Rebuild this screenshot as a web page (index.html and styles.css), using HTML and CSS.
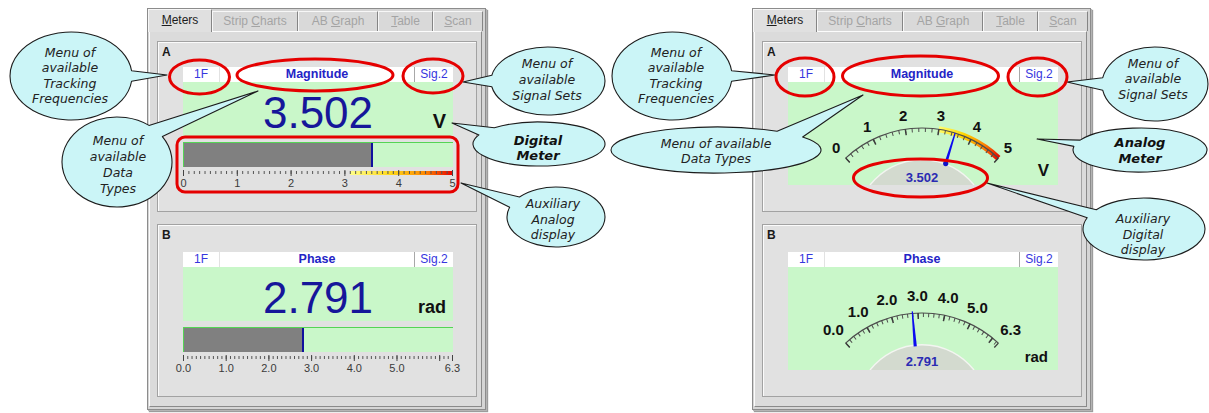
FILE: index.html
```html
<!DOCTYPE html>
<html>
<head>
<meta charset="utf-8">
<title>Meters</title>
<link rel="stylesheet" href="styles.css">
</head>
<body>
<div class="page">

  <div class="win">
    <div class="tabs">
      <div class="tab t1 active"><u>M</u>eters</div>
      <div class="tab t2">Strip <u>C</u>harts</div>
      <div class="tab t3">AB <u>G</u>raph</div>
      <div class="tab t4"><u>T</u>able</div>
      <div class="tab t5"><u>S</u>can</div>
    </div>
    <div class="panel">
      <div class="group">
        <div class="glabel">A</div>
        <div class="meter">
          <div class="hdr"><span class="c1">1F</span><span class="c2">Magnitude</span><span class="c3">Sig.2</span></div>
          <div class="digital"><span class="num">3.502</span><span class="unit">V</span></div>
          <div class="bar"><div class="fill" style="width:189px"></div></div>
          <svg class="scale" width="270" height="22" viewBox="0 0 270 22">
            <defs>
              <linearGradient id="hot" x1="0" x2="1" y1="0" y2="0">
                <stop offset="0" stop-color="#ffff88"/>
                <stop offset="0.4" stop-color="#ffd81a"/>
                <stop offset="0.72" stop-color="#ff8a00"/>
                <stop offset="1" stop-color="#ea0000"/>
              </linearGradient>
            </defs>
            <rect class="hotband" x="167" y="4" width="103" height="4"/>
            <line class="sc-minor a5" x1="0" y1="5.5" x2="270" y2="5.5"/>
            <line class="sc-major a5" x1="0" y1="6" x2="270" y2="6"/>
            <text class="sc-lbl" x="0.5" y="20">0</text>
            <text class="sc-lbl" x="54.3" y="20">1</text>
            <text class="sc-lbl" x="108.1" y="20">2</text>
            <text class="sc-lbl" x="161.9" y="20">3</text>
            <text class="sc-lbl" x="215.7" y="20">4</text>
            <text class="sc-lbl" x="269.5" y="20">5</text>
          </svg>
        </div>
      </div>
      <div class="group b">
        <div class="glabel">B</div>
        <div class="meter">
          <div class="hdr"><span class="c1">1F</span><span class="c2">Phase</span><span class="c3">Sig.2</span></div>
          <div class="digital"><span class="num">2.791</span><span class="unit rad">rad</span></div>
          <div class="bar"><div class="fill" style="width:120px"></div></div>
          <svg class="scale" width="270" height="22" viewBox="0 0 270 22">
            <line class="sc-minor b6" x1="0" y1="5.5" x2="270" y2="5.5"/>
            <line class="sc-major b6" x1="0" y1="6" x2="270" y2="6"/>
            <line class="sc-end" x1="269.5" y1="3" x2="269.5" y2="9"/>
            <text class="sc-lbl" x="0.5" y="20">0.0</text>
            <text class="sc-lbl" x="43.2" y="20">1.0</text>
            <text class="sc-lbl" x="85.9" y="20">2.0</text>
            <text class="sc-lbl" x="128.6" y="20">3.0</text>
            <text class="sc-lbl" x="171.3" y="20">4.0</text>
            <text class="sc-lbl" x="214" y="20">5.0</text>
            <text class="sc-lbl" x="269.5" y="20">6.3</text>
          </svg>
        </div>
      </div>
    </div>
  </div>

  <div class="win">
    <div class="tabs">
      <div class="tab t1 active"><u>M</u>eters</div>
      <div class="tab t2">Strip <u>C</u>harts</div>
      <div class="tab t3">AB <u>G</u>raph</div>
      <div class="tab t4"><u>T</u>able</div>
      <div class="tab t5"><u>S</u>can</div>
    </div>
    <div class="panel">
      <div class="group">
        <div class="glabel">A</div>
        <div class="meter">
          <div class="hdr"><span class="c1">1F</span><span class="c2">Magnitude</span><span class="c3">Sig.2</span></div>
          <div class="analog">
            <svg class="dial" width="270" height="103" viewBox="0 0 270 103">
              <defs>
                <linearGradient id="band" gradientUnits="userSpaceOnUse" x1="150" y1="47" x2="211" y2="77">
                  <stop offset="0" stop-color="#ffff70"/>
                  <stop offset="0.38" stop-color="#ffd500"/>
                  <stop offset="0.72" stop-color="#ff8000"/>
                  <stop offset="1" stop-color="#e60000"/>
                </linearGradient>
              </defs>
              <path class="band" d="M 150.74 47.25 A 112 112 0 0 1 210.38 76.09"/>
              <path class="arc" d="M 57.62 76.09 A 112 112 0 0 1 210.38 76.09"/>
              <path class="tk-min a5" d="M 58.98 77.55 A 110 110 0 0 1 209.02 77.55"/>
              <path class="tk-maj a5" d="M 59.66 78.28 A 109 109 0 0 1 208.34 78.28"/>
              <line class="tk-end" x1="61.71" y1="80.48" x2="57.62" y2="76.09"/>
              <line class="tk-end" x1="206.29" y1="80.48" x2="210.38" y2="76.09"/>
              <text class="dl" x="48.07" y="65.85">0</text>
              <text class="dl" x="79.16" y="44.56">1</text>
              <text class="dl" x="115.16" y="33.41">2</text>
              <text class="dl" x="152.84" y="33.41">3</text>
              <text class="dl" x="188.84" y="44.56">4</text>
              <text class="dl" x="219.93" y="65.85">5</text>
              <text class="du" x="261" y="94">V</text>
              <path class="hub" d="M 82 103 A 66 66 0 0 1 186 103 Z"/>
              <path class="hub-rim" d="M 82 103 A 66 66 0 0 1 186 103"/>
              <polygon class="needle" points="156.27,81.15 159.13,82.03 167.74,51.21 166.60,50.85"/>
              <circle class="pivot" cx="157.7" cy="81.6" r="2.6"/>
              <text class="hubtxt" x="134" y="100">3.502</text>
            </svg>
          </div>
        </div>
      </div>
      <div class="group b">
        <div class="glabel">B</div>
        <div class="meter">
          <div class="hdr"><span class="c1">1F</span><span class="c2">Phase</span><span class="c3">Sig.2</span></div>
          <div class="analog">
            <svg class="dial" width="270" height="103" viewBox="0 0 270 103">
              <path class="arc" d="M 57.62 76.09 A 112 112 0 0 1 210.38 76.09"/>
              <path class="tk-min b6" d="M 58.98 77.55 A 110 110 0 0 1 209.02 77.55"/>
              <path class="tk-maj b6" d="M 59.66 78.28 A 109 109 0 0 1 208.34 78.28"/>
              <line class="tk-end" x1="61.71" y1="80.48" x2="57.62" y2="76.09"/>
              <line class="tk-end" x1="206.29" y1="80.48" x2="210.38" y2="76.09"/>
              <text class="dl" x="45.34" y="62.92">0.0</text>
              <text class="dl" x="70.27" y="44.69">1.0</text>
              <text class="dl" x="98.82" y="32.85">2.0</text>
              <text class="dl" x="129.36" y="28.08">3.0</text>
              <text class="dl" x="160.14" y="30.65">4.0</text>
              <text class="dl" x="189.47" y="40.43">5.0</text>
              <text class="dl" x="222.66" y="62.92">6.3</text>
              <text class="du rad" x="260" y="95">rad</text>
              <path class="hub" d="M 82 103 A 66 66 0 0 1 186 103 Z"/>
              <path class="hub-rim" d="M 82 103 A 66 66 0 0 1 186 103"/>
              <polygon class="needle" points="125.66,79.43 128.84,79.15 124.86,44.37 123.66,44.47"/>
              <text class="hubtxt" x="134" y="99">2.791</text>
            </svg>
          </div>
        </div>
      </div>
    </div>
  </div>

  <svg class="overlay" width="1209" height="413" viewBox="0 0 1209 413">
    <!-- left callouts -->
    <path class="balloon" d="M 131.56 70.73 L 167 75 L 131.56 81.27 A 61 44 0 1 1 131.56 70.73 Z"/>
    <text class="bt" x="70" y="57">Menu of</text>
    <text class="bt" x="70" y="72">available</text>
    <text class="bt" x="70" y="88">Tracking</text>
    <text class="bt" x="70" y="103">Frequencies</text>

    <path class="balloon" d="M 149.0 125.4 L 258 91 L 162.4 136.6 A 55 45 0 1 1 149.0 125.4 Z"/>
    <text class="bt" x="118" y="145">Menu of</text>
    <text class="bt" x="118" y="161">available</text>
    <text class="bt" x="118" y="177">Data</text>
    <text class="bt" x="118" y="193">Types</text>

    <path class="balloon" d="M 491.82 86.75 L 463 82 L 491.82 75.25 A 57 34 0 1 1 491.82 86.75 Z"/>
    <text class="bt" x="547" y="68">Menu of</text>
    <text class="bt" x="547" y="84">available</text>
    <text class="bt" x="547" y="100">Signal Sets</text>

    <path class="balloon" d="M 478.92 134.89 L 452 123 L 494.33 127.80 A 66 22 0 1 1 478.92 134.89 Z"/>
    <text class="bt strong" x="538" y="145">Digital</text>
    <text class="bt strong" x="538" y="160">Meter</text>

    <path class="balloon" d="M 509.64 207.28 L 461 183 L 519.45 197.02 A 49 30 0 1 1 509.64 207.28 Z"/>
    <text class="bt" x="553" y="208">Auxiliary</text>
    <text class="bt" x="553" y="224">Analog</text>
    <text class="bt" x="553" y="239">display</text>

    <!-- right callouts -->
    <path class="balloon" d="M 731.57 70.73 L 775 75 L 731.57 81.27 A 60 44 0 1 1 731.57 70.73 Z"/>
    <text class="bt" x="676" y="57">Menu of</text>
    <text class="bt" x="676" y="72">available</text>
    <text class="bt" x="676" y="88">Tracking</text>
    <text class="bt" x="676" y="103">Frequencies</text>

    <path class="balloon" d="M 777.08 131.29 L 863 95 L 802.66 137.01 A 105 23 0 1 1 777.08 131.29 Z"/>
    <text class="bt" x="716" y="148">Menu of available</text>
    <text class="bt" x="716" y="163">Data Types</text>

    <path class="balloon" d="M 1102.76 90.26 L 1067 82 L 1102.76 77.74 A 53 37 0 1 1 1102.76 90.26 Z"/>
    <text class="bt" x="1153" y="68">Menu of</text>
    <text class="bt" x="1153" y="83">available</text>
    <text class="bt" x="1153" y="99">Signal Sets</text>

    <path class="balloon" d="M 1073.91 146.39 L 1037 139 L 1080.14 140.12 A 67 22 0 1 1 1073.91 146.39 Z"/>
    <text class="bt strong" x="1140" y="147">Analog</text>
    <text class="bt strong" x="1140" y="163">Meter</text>

    <path class="balloon" d="M 1087.18 217.72 L 987 183 L 1096.29 209.68 A 61 31 0 1 1 1087.18 217.72 Z"/>
    <text class="bt" x="1143" y="223">Auxiliary</text>
    <text class="bt" x="1143" y="239">Digital</text>
    <text class="bt" x="1143" y="254">display</text>

    <!-- red highlight rings -->
    <ellipse class="ring" cx="199.5" cy="77" rx="30" ry="17"/>
    <ellipse class="ring" cx="315" cy="75" rx="78" ry="16"/>
    <ellipse class="ring" cx="433" cy="76" rx="30" ry="17"/>
    <rect class="ring" x="177" y="137" width="281" height="55" rx="8" ry="8"/>
    <ellipse class="ring" cx="805" cy="77" rx="29" ry="19"/>
    <ellipse class="ring" cx="920.5" cy="76" rx="78" ry="20"/>
    <ellipse class="ring" cx="1037.5" cy="77" rx="29.5" ry="19"/>
    <ellipse class="ring" cx="920.5" cy="178" rx="67" ry="19"/>
  </svg>

</div>
</body>
</html>
```

FILE: styles.css
```css
* { box-sizing: border-box; }

html, body {
  margin: 0;
  padding: 0;
  background: #ffffff;
}

body {
  font-family: "Liberation Sans", Arial, sans-serif;
}

.page {
  position: relative;
  width: 1209px;
  height: 413px;
  overflow: hidden;
  display: flex;
  align-items: flex-start;
  gap: 266px;
  padding: 8px 0 0 147px;
}

/* ---------- window ---------- */
.win {
  width: 339px;
  height: 402px;
  flex: none;
  background: #d5d5d5;
  border: 1px solid #8c8c8c;
  box-shadow: 1px 1px 0 #b4b4b4, 2px 2px 1px #9c9c9c;
  display: flex;
  flex-direction: column;
}

.tabs {
  display: flex;
  align-items: flex-end;
  height: 22px;
  flex: none;
}

.tab {
  height: 20px;
  line-height: 19px;
  font-size: 12px;
  text-align: center;
  color: #a4a4a4;
  background: #d9d9d9;
  border: 1px solid #f7f7f7;
  border-right-color: #858585;
  border-bottom: none;
  white-space: nowrap;
}

.tab u { text-decoration: underline; }

.t1 { width: 64px; }
.t2 { width: 86px; }
.t3 { width: 80px; }
.t4 { width: 55px; }
.t5 { width: 50px; }

.tab.active {
  height: 23px;
  line-height: 21px;
  margin-bottom: -1px;
  color: #1c1c1c;
  background: #e0e0e0;
  position: relative;
  z-index: 1;
}

.panel {
  flex: 1;
  margin: 0 3px 2px 1px;
  background: #dbdbdb;
  border: 1px solid;
  border-color: #fcfcfc #8a8a8a #8a8a8a #fcfcfc;
  padding: 9px 4px 9px 7px;
  display: flex;
  flex-direction: column;
  gap: 12px;
}

.group {
  height: 171px;
  background: #e1e1e1;
  border: 1px solid #a2a2a2;
  box-shadow: inset 1px 1px 0 #fbfbfb;
  padding: 3px 0 0 4px;
}

.group.b { height: 173px; }

.glabel {
  height: 14px;
  line-height: 14px;
  font-size: 12px;
  font-weight: bold;
  color: #1a1a1a;
}

.meter {
  width: 270px;
  margin: 8px 0 0 21px;
}

.group.b .meter { margin-top: 10px; }

/* ---------- header row ---------- */
.hdr {
  display: flex;
  height: 15px;
  line-height: 15px;
  background: #ffffff;
  font-size: 12px;
  color: #3636de;
}

.c1 { width: 36px; text-align: center; }
.c3 { width: 38px; text-align: center; }

.c2 {
  flex: 1;
  text-align: center;
  font-size: 12.5px;
  font-weight: bold;
  color: #2424c6;
  border-left: 1px solid #e2e2e2;
  border-right: 1px solid #a8a8a8;
}

/* ---------- digital meter ---------- */
.digital {
  height: 54px;
  background: #c9f7c9;
  display: grid;
  grid-template-columns: 1fr auto 1fr;
  align-items: baseline;
  padding: 9px 7px 0;
}

.num {
  grid-column: 2;
  font-size: 44px;
  line-height: 44px;
  color: #16169a;
}

.unit {
  grid-column: 3;
  justify-self: end;
  font-size: 20px;
  font-weight: bold;
  color: #111111;
}

.unit.rad { font-size: 18px; }

.bar {
  margin-top: 6px;
  height: 25px;
  display: flex;
  background: #c9f7c9;
  border-top: 1px solid #55d455;
  border-left: 1px solid #55d455;
}

.fill {
  background: #808080;
  border-right: 2px solid #10109e;
}

.scale {
  display: block;
  overflow: visible;
}

.hotband { fill: url(#hot); }

.sc-minor { stroke: #555555; stroke-width: 3; }
.sc-major { stroke: #444444; stroke-width: 6; }
.sc-minor.a5 { stroke-dasharray: 1 4.38; }
.sc-major.a5 { stroke-dasharray: 1 52.8; }
.sc-minor.b6 { stroke-dasharray: 1 3.2698; }
.sc-major.b6 { stroke-dasharray: 1 41.698; }
.sc-end { stroke: #444444; stroke-width: 1; }

.sc-lbl {
  font-size: 11px;
  fill: #3a3a3a;
  text-anchor: middle;
}

/* ---------- analog meter ---------- */
.analog {
  height: 103px;
  background: #c9f7c9;
}

.dial { display: block; }

.band {
  fill: none;
  stroke: url(#band);
  stroke-width: 6;
}

.arc {
  fill: none;
  stroke: #4d4d4d;
  stroke-width: 1.2;
}

.tk-min {
  fill: none;
  stroke: #4d4d4d;
  stroke-width: 4;
}

.tk-maj {
  fill: none;
  stroke: #3d3d3d;
  stroke-width: 6;
}

.tk-min.a5 { stroke-dasharray: 0.5 5.604 0.5 0; }
.tk-maj.a5 { stroke-dasharray: 0.75 31.22 0.75 0; }
.tk-min.b6 { stroke-dasharray: 0.5 4.2416 0.5 0; }
.tk-maj.b6 { stroke-dasharray: 0.75 24.47 0.75 0; }

.tk-end {
  stroke: #3d3d3d;
  stroke-width: 1.3;
}

.dl {
  font-size: 15px;
  font-weight: bold;
  fill: #111111;
  text-anchor: middle;
  dominant-baseline: central;
}

.du {
  font-size: 17px;
  font-weight: bold;
  fill: #111111;
  text-anchor: end;
}

.du.rad { font-size: 15px; }

.hub { fill: #d3dacf; }

.hub-rim {
  fill: none;
  stroke: #f3f5f1;
  stroke-width: 1.5;
}

.needle { fill: #0b0bf0; }
.pivot { fill: #1212c8; }

.hubtxt {
  font-size: 13px;
  font-weight: bold;
  fill: #2b2bb3;
  text-anchor: middle;
}

/* ---------- annotation overlay ---------- */
.overlay {
  position: absolute;
  left: 0;
  top: 0;
  pointer-events: none;
}

.balloon {
  fill: #cbf5f7;
  stroke: #1c1c1c;
  stroke-width: 1.1;
  stroke-linejoin: round;
}

.bt {
  font-family: "DejaVu Sans", sans-serif;
  font-style: italic;
  font-size: 12.5px;
  fill: #222222;
  text-anchor: middle;
}

.bt.strong {
  font-weight: bold;
  font-size: 13px;
  fill: #111111;
}

.ring {
  fill: none;
  stroke: #e50000;
  stroke-width: 3;
}
```
